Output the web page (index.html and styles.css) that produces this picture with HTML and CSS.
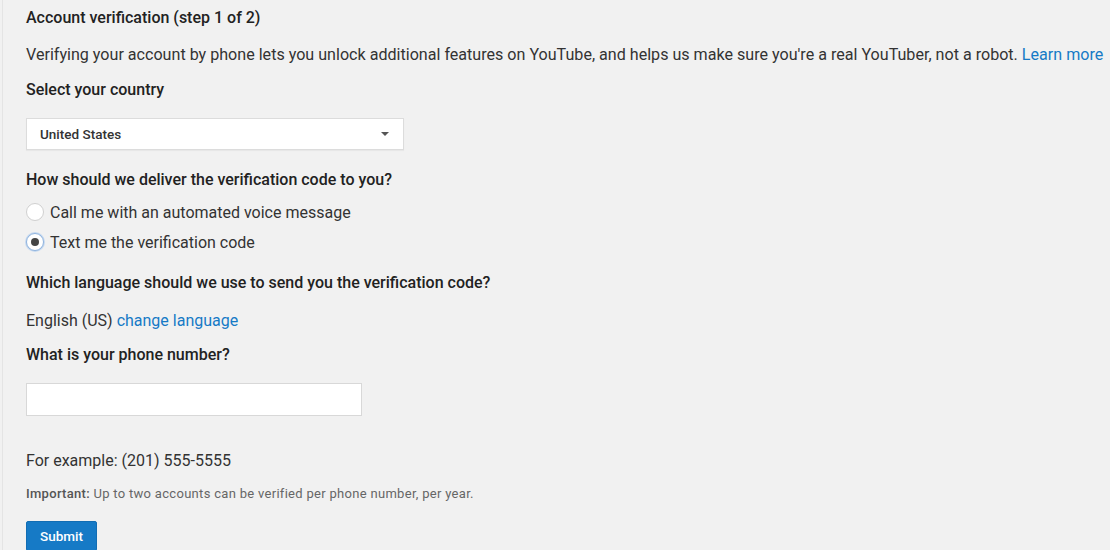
FILE: index.html
```html
<!DOCTYPE html>
<html>
<head>
<meta charset="utf-8">
<link rel="stylesheet" href="styles.css">
</head>
<body>
<div class="page">
  <h1 class="title">Account verification (step 1 of 2)</h1>
  <p class="intro">Verifying your account by phone lets you unlock additional features on YouTube, and helps us make sure you're a real YouTuber, not a robot. <a class="link" href="#">Learn more</a></p>
  <div class="label label-country">Select your country</div>
  <div class="select">
    <span class="select-text">United States</span>
    <span class="select-arrow"></span>
  </div>
  <div class="label label-deliver">How should we deliver the verification code to you?</div>
  <div class="radio radio-first"><span class="radio-dot"></span><span class="radio-text">Call me with an automated voice message</span></div>
  <div class="radio radio-second"><span class="radio-dot checked"></span><span class="radio-text">Text me the verification code</span></div>
  <div class="label label-lang">Which language should we use to send you the verification code?</div>
  <div class="lang">English (US) <a class="link" href="#">change language</a></div>
  <div class="label label-phone">What is your phone number?</div>
  <div class="input"></div>
  <div class="example">For example: (201) 555-5555</div>
  <div class="note"><span class="note-strong">Important:</span> Up to two accounts can be verified per phone number, per year.</div>
  <button class="submit">Submit</button>
</div>
</body>
</html>
```
FILE: styles.css
```css
html, body {
  margin: 0;
  padding: 0;
  background: #f1f1f1;
}
body {
  font-family: Roboto, "Noto Sans", "Liberation Sans", sans-serif;
  color: #222;
  overflow: hidden;
  height: 550px;
}
.page {
  padding: 8px 0 0 23px;
  border-left: 1px solid #e4e4e4;
  margin-left: 2px;
  height: 550px;
  box-sizing: border-box;
}
.title {
  margin: 0;
  font-size: 16px;
  font-weight: 500;
  line-height: 20px;
}
.intro {
  margin: 17px 0 0 0;
  font-size: 16.1px;
  line-height: 20px;
  white-space: nowrap;
  color: #333;
}
.link {
  color: #167ac6;
  text-decoration: none;
}
.label {
  font-size: 16px;
  font-weight: 500;
  line-height: 20px;
}
.label-country { margin-top: 15px; }
.select {
  margin-top: 18px;
  width: 378px;
  height: 32px;
  box-sizing: border-box;
  background: #fff;
  border: 1px solid #dcdcdc;
  box-shadow: 0 1px 1px rgba(0,0,0,0.04);
  display: flex;
  align-items: center;
  justify-content: space-between;
  padding: 0 14px 0 13px;
}
.select-text {
  font-size: 13.5px;
  font-weight: 500;
  color: #333;
}
.select-arrow {
  width: 0;
  height: 0;
  border-left: 4px solid transparent;
  border-right: 4px solid transparent;
  border-top: 4px solid #555;
}
.label-deliver { margin-top: 20px; }
.radio {
  display: flex;
  align-items: center;
  height: 20px;
  font-size: 16px;
  color: #333;
}
.radio-first { margin-top: 12px; }
.radio-second { margin-top: 10px; }
.radio-dot {
  width: 16px;
  height: 16px;
  border-radius: 50%;
  border: 1px solid #d0d0d0;
  background: #fff;
  margin-right: 6px;
  box-sizing: content-box;
  position: relative;
  flex: none;
}
.radio-dot.checked {
  border-color: #8fb3dd;
  box-shadow: 0 0 0 1px #c6d9f0;
}
.radio-dot.checked::after {
  content: "";
  position: absolute;
  left: 4px;
  top: 4px;
  width: 8px;
  height: 8px;
  border-radius: 50%;
  background: #444;
}
.label-lang { margin-top: 21px; }
.lang {
  margin-top: 18px;
  font-size: 16px;
  line-height: 20px;
  color: #333;
}
.label-phone { margin-top: 14px; }
.input {
  margin-top: 18px;
  width: 336px;
  height: 33px;
  box-sizing: border-box;
  background: #fff;
  border: 1px solid #d8d8d8;
}
.example {
  margin-top: 35px;
  font-size: 16px;
  line-height: 20px;
  color: #333;
}
.note {
  margin-top: 15px;
  font-size: 13px;
  letter-spacing: 0.3px;
  line-height: 16px;
  color: #666;
}
.note-strong {
  font-weight: 500;
  color: #555;
}
.submit {
  display: block;
  margin-top: 19px;
  height: 30px;
  padding: 0 13px;
  background: #167ac6;
  border: 1px solid #126db3;
  border-radius: 2px;
  color: #fff;
  font-family: inherit;
  font-size: 13.5px;
  font-weight: 500;
}
```
